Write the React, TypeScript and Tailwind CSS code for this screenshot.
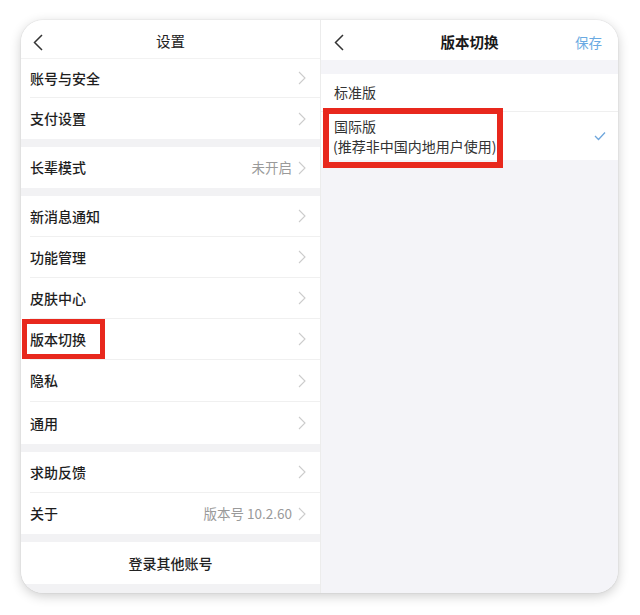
import type { ReactNode } from 'react'

const font = { fontFamily: '"Noto Sans CJK SC", "Noto Sans", sans-serif' }

function Chevron() {
  return (
    <svg width="8" height="14" viewBox="0 0 8 14" className="shrink-0">
      <polyline points="1,1 7,7 1,13" fill="none" stroke="#cccccc" strokeWidth="1.1" />
    </svg>
  )
}

function Back() {
  return (
    <svg width="10" height="17" viewBox="0 0 10 17">
      <polyline points="9,1 1.5,8.5 9,16" fill="none" stroke="#333" strokeWidth="1.5" />
    </svg>
  )
}

function Row({
  label,
  value,
  h = 'h-[41px]',
  last = false,
  children,
}: {
  label: string
  value?: string
  h?: string
  last?: boolean
  children?: ReactNode
}) {
  return (
    <div className={`relative flex items-center bg-white pl-[9px] ${h}`}>
      <div className={`flex h-full flex-1 items-center pr-[14px] ${last ? '' : 'border-b border-[#f0f0f0]'}`}>
        <span className="flex-1 text-[14px] font-medium text-[#1e1e1e]">{label}</span>
        {value && <span className="mr-[6px] text-[13.5px] text-[#9a9a9a]">{value}</span>}
        <Chevron />
      </div>
      {children}
    </div>
  )
}

const Gap = () => <div className="h-[8px] bg-[#f2f2f4]" />

export default function App() {
  return (
    <div className="h-[615px] w-[640px] bg-white pl-[21px] pt-[20px]" style={font}>
      <div className="flex h-[573px] w-[597px] overflow-hidden rounded-[22px] shadow-[0_3px_12px_rgba(0,0,0,0.2),0_0_1px_rgba(0,0,0,0.3)]">
        {/* 设置 */}
        <div className="flex w-[299px] flex-col bg-[#f2f2f4]">
          <div className="relative flex h-[39px] items-center justify-center border-b border-[#f2f2f2] bg-white pt-[3px]">
            <div className="absolute left-[12px] top-[14px]">
              <Back />
            </div>
            <span className="text-[14.5px] text-[#222]">设置</span>
          </div>
          <Row label="账号与安全" h="h-[39px]" />
          <Row label="支付设置" last />
          <Gap />
          <Row label="长辈模式" value="未开启" last />
          <Gap />
          <Row label="新消息通知" />
          <Row label="功能管理" />
          <Row label="皮肤中心" />
          <Row label="版本切换">
            <div className="absolute left-[1px] top-0 h-[40px] w-[83px] border-[5px] border-[#e8281d]" />
          </Row>
          <Row label="隐私" h="h-[42px]" />
          <Row label="通用" h="h-[42px]" last />
          <Gap />
          <Row label="求助反馈" />
          <Row label="关于" value="版本号 10.2.60" last />
          <Gap />
          <div className="flex h-[42px] items-center justify-center bg-white text-[14px] font-medium text-[#222]">
            登录其他账号
          </div>
          <div className="flex-1 bg-[#f2f2f4]" />
        </div>

        {/* 版本切换 */}
        <div className="flex flex-1 flex-col border-l border-[#ececec] bg-[#f4f4f8]">
          <div className="relative flex h-[40px] items-center justify-center bg-white pt-[3px]">
            <div className="absolute left-[13px] top-[14px]">
              <Back />
            </div>
            <span className="text-[14.5px] font-bold text-[#1a1a1a]">版本切换</span>
            <span className="absolute right-[16px] top-[12px] text-[13.5px] text-[#6aaae2]">保存</span>
          </div>
          <div className="h-[14px]" />
          <div className="flex h-[38px] items-center border-b border-[#efefef] bg-white pl-[13px] text-[14px] text-[#333]">
            标准版
          </div>
          <div className="relative flex h-[48px] items-center bg-white pl-[13px] pr-[12px]">
            <div className="flex-1 text-[14px] leading-[20px] text-[#333]">
              <div>国际版</div>
              <div className="-ml-[1px]">(推荐非中国内地用户使用)</div>
            </div>
            <svg width="12" height="10" viewBox="0 0 12 10">
              <polyline points="1,5 4.5,8.5 11,1.5" fill="none" stroke="#6ea6dc" strokeWidth="1.3" />
            </svg>
            <div className="absolute -top-[4px] left-[2px] h-[60px] w-[180px] border-[6px] border-[#e8281d]" />
          </div>
        </div>
      </div>
    </div>
  )
}
